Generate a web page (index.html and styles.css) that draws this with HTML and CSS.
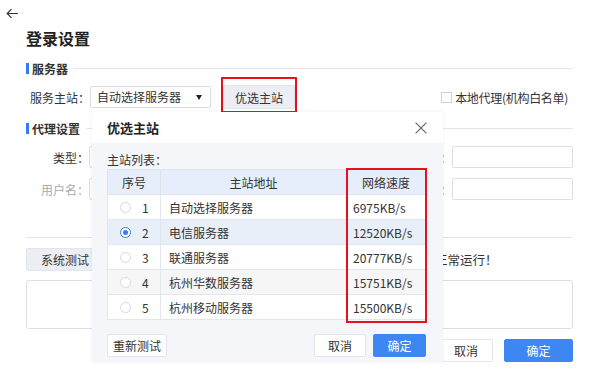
FILE: index.html
```html
<!DOCTYPE html>
<html lang="zh">
<head>
<meta charset="utf-8">
<title>登录设置</title>
<link rel="stylesheet" href="styles.css">
</head>
<body>
<div class="page">
  <div class="back">
    <svg width="13" height="11" viewBox="0 0 13 11"><path d="M12 5.5H1.5M5.5 1.2L1.2 5.5l4.3 4.3" fill="none" stroke="#333" stroke-width="1.2"/></svg>
  </div>
  <h1 class="title">登录设置</h1>

  <div class="section-head"><span class="section-name">服务器</span><span class="section-line"></span></div>
  <div class="server-row">
    <span class="label">服务主站：</span>
    <div class="select">自动选择服务器<span class="caret"></span></div>
    <button class="btn btn-gray btn-pick mark-top">优选主站</button>
    <label class="check"><span class="box"></span>本地代理(机构白名单)</label>
  </div>

  <div class="section-head section-proxy"><span class="section-name">代理设置</span><span class="section-line"></span></div>
  <div class="proxy-grid">
    <span class="label">类型：</span><div class="input input-left"></div>
    <span class="label muted">地址：</span><div class="input"></div>
    <span class="label muted">用户名：</span><div class="input input-left"></div>
    <span class="label muted">端口：</span><div class="input"></div>
  </div>

  <div class="divider"></div>

  <div class="test-row">
    <button class="btn btn-gray btn-test">系统测试</button>
    <span class="msg">正常运行！</span>
  </div>
  <div class="result"></div>

  <div class="actions">
    <button class="btn btn-white btn-cancel">取消</button>
    <button class="btn btn-blue btn-ok">确定</button>
  </div>
</div>

<div class="dialog">
  <div class="dialog-head">
    <span class="dialog-title">优选主站</span>
    <svg class="close" width="12" height="12" viewBox="0 0 12 12"><path d="M0.6 0.6L11.4 11.4M11.4 0.6L0.6 11.4" stroke="#666" stroke-width="1.2" fill="none"/></svg>
  </div>
  <div class="dialog-body">
    <div class="list-label">主站列表：</div>
    <div class="table-wrap">
      <table class="table">
        <colgroup><col class="c1"><col class="c2"><col class="c3"></colgroup>
        <thead>
          <tr><th>序号</th><th>主站地址</th><th>网络速度</th></tr>
        </thead>
        <tbody>
          <tr><td><div class="idx"><span class="radio"></span>1</div></td><td>自动选择服务器</td><td>6975KB/s</td></tr>
          <tr class="selected"><td><div class="idx"><span class="radio on"></span>2</div></td><td>电信服务器</td><td>12520KB/s</td></tr>
          <tr><td><div class="idx"><span class="radio"></span>3</div></td><td>联通服务器</td><td>20777KB/s</td></tr>
          <tr class="stripe"><td><div class="idx"><span class="radio"></span>4</div></td><td>杭州华数服务器</td><td>15751KB/s</td></tr>
          <tr><td><div class="idx"><span class="radio"></span>5</div></td><td>杭州移动服务器</td><td>15500KB/s</td></tr>
        </tbody>
      </table>
      <div class="mark-col"></div>
    </div>
    <div class="dialog-foot">
      <button class="btn btn-white btn-retest">重新测试</button>
      <div class="foot-right">
        <button class="btn btn-white btn-dcancel">取消</button>
        <button class="btn btn-blue btn-dok">确定</button>
      </div>
    </div>
  </div>
</div>
</body>
</html>
```

FILE: styles.css
```css
* { box-sizing: border-box; }
html, body { margin: 0; padding: 0; }
body {
  width: 600px;
  height: 371px;
  overflow: hidden;
  position: relative;
  background: #fff;
  color: #333;
  font-family: "Noto Sans CJK SC", "Noto Sans", sans-serif;
  font-size: 12px;
}
button {
  font-family: inherit;
  font-size: 12px;
  color: #333;
  padding: 0;
  cursor: pointer;
}
.page {
  padding: 0 27px 0 26px;
}
.back {
  margin-left: -20px;
  padding-top: 8px;
  height: 20px;
  line-height: 0;
}
.title {
  margin: 7px 0 0;
  font-size: 16px;
  line-height: 22px;
  font-weight: bold;
  color: #222;
}
.section-head {
  margin-top: 11px;
  display: flex;
  align-items: center;
  height: 16px;
}
.section-head::before {
  content: "";
  width: 3px;
  height: 11px;
  background: #2f7cf4;
  margin-right: 3px;
}
.section-name {
  font-weight: bold;
  font-size: 12px;
  color: #333;
}
.section-line {
  flex: 1;
  height: 1px;
  background: #e1e4eb;
  margin-left: 6px;
}
.server-row {
  margin-top: 9px;
  display: flex;
  align-items: center;
  height: 24px;
}
.label {
  white-space: nowrap;
}
.server-row .label {
  padding-left: 4px;
}
.select {
  position: relative;
  width: 121px;
  height: 22px;
  line-height: 20px;
  border: 1px solid #d8dbe2;
  border-radius: 2px;
  padding-left: 6px;
  background: #fff;
}
.caret {
  position: absolute;
  right: 8px;
  top: 8px;
  width: 0;
  height: 0;
  border-left: 3.5px solid transparent;
  border-right: 3.5px solid transparent;
  border-top: 5px solid #222;
}
.btn {
  height: 23px;
  border-radius: 2px;
  border: 1px solid transparent;
}
.btn-gray {
  background: #eceef4;
  border-color: #e2e5ec;
}
.btn-white {
  background: #fff;
  border-color: #e3e6ec;
}
.btn-blue {
  background: #3d87f2;
  border-color: #3d87f2;
  color: #fff;
}
.btn-pick {
  margin-left: 12px;
  width: 72px;
  height: 24px;
}
.mark-top {
  position: relative;
}
.mark-top::after {
  content: "";
  position: absolute;
  left: -3px;
  right: -3px;
  top: -9px;
  bottom: -5px;
  border: 2px solid #e8101c;
  border-radius: 1px;
}
.check {
  margin-left: auto;
  margin-right: 5px;
  display: flex;
  align-items: center;
  color: #333;
  letter-spacing: -0.3px;
}
.box {
  width: 11px;
  height: 11px;
  border: 1px solid #cdd1d8;
  background: #fff;
  margin-right: 3px;
}
.section-proxy {
  margin-top: 11px;
}
.proxy-grid {
  margin-top: 10px;
  display: grid;
  grid-template-columns: 63px 1fr 63px 121px;
  grid-auto-rows: 22px;
  row-gap: 10px;
  align-items: center;
}
.proxy-grid .label {
  text-align: right;
}
.muted {
  color: #a6a9af;
}
.input {
  height: 22px;
  border: 1px solid #dcdfe6;
  border-radius: 2px;
  background: #fff;
}
.input-left {
  margin-right: 20px;
}
.divider {
  margin-top: 37px;
  height: 1px;
  background: #e1e4eb;
}
.test-row {
  margin-top: 10px;
  display: flex;
  align-items: center;
  height: 23px;
}
.btn-test {
  width: 78px;
}
.msg {
  margin-left: 331px;
  color: #333;
  font-size: 12.5px;
}
.result {
  margin-top: 9px;
  height: 49px;
  border: 1px solid #dcdfe6;
  border-radius: 3px;
}
.actions {
  margin-top: 10px;
  display: flex;
  justify-content: flex-end;
  gap: 11px;
}
.btn-cancel { width: 54px; }
.btn-ok { width: 69px; }

/* dialog */
.dialog {
  position: absolute;
  left: 92px;
  top: 112px;
  width: 351px;
  height: 250px;
  background: #f4f6fa;
  box-shadow: 0 0 4px rgba(0, 0, 0, 0.06);
}
.dialog-head {
  height: 31px;
  background: #fff;
  display: flex;
  align-items: center;
  justify-content: space-between;
  padding: 0 16px 0 15px;
}
.dialog-title {
  font-size: 13px;
  font-weight: bold;
  color: #222;
}
.dialog-body {
  padding: 8px 18px 0 15px;
}
.list-label {
  line-height: 18px;
  color: #333;
}
.table-wrap {
  position: relative;
}
.table {
  width: 318px;
  border-collapse: collapse;
  table-layout: fixed;
  background: #fff;
  border: 1px solid #e0e4eb;
}
.c1 { width: 53px; }
.c2 { width: 186px; }
.c3 { width: 79px; }
.table th {
  height: 25px;
  background: #e5eefa;
  font-weight: normal;
  color: #333;
  border: 1px solid #dfe4ec;
  padding: 0;
}
.table td {
  height: 25px;
  border: 1px solid #e3e6ec;
  padding: 0 0 0 8px;
  color: #333;
  white-space: nowrap;
}
.table td:first-child {
  padding-left: 12px;
}
.table td:last-child {
  padding-left: 6px;
}
.table tr.selected td {
  background: #e8eff9;
}
.table tr.stripe td {
  background: #f6f6f7;
}
.idx {
  display: flex;
  align-items: center;
  gap: 11px;
}
.radio {
  width: 11px;
  height: 11px;
  border-radius: 50%;
  border: 1px solid #d6d9df;
  background: #fff;
  position: relative;
}
.radio.on {
  border-color: #3b7de9;
}
.radio.on::after {
  content: "";
  position: absolute;
  left: 2px;
  top: 2px;
  width: 5px;
  height: 5px;
  border-radius: 50%;
  background: #3b7de9;
}
.mark-col {
  position: absolute;
  left: 239px;
  top: -1px;
  width: 81px;
  height: 155px;
  border: 2px solid #e8101c;
}
.dialog-foot {
  margin-top: 14px;
  display: flex;
  justify-content: space-between;
}
.foot-right {
  display: flex;
  gap: 7px;
  margin-right: -1px;
}
.btn-retest { width: 60px; height: 23px; }
.btn-dcancel { width: 52px; height: 23px; }
.btn-dok { width: 53px; height: 23px; }
```
